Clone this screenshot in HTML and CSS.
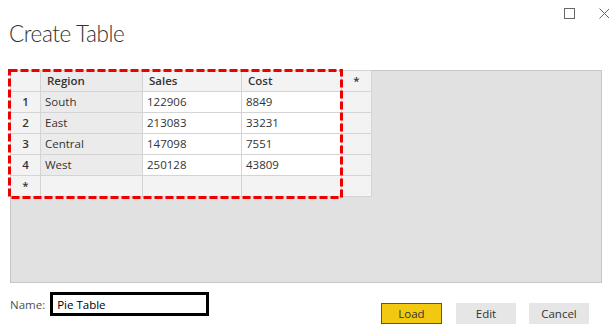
FILE: index.html
```html
<!DOCTYPE html>
<html lang="en">
<head>
    <meta charset="UTF-8">
    <meta name="viewport" content="width=device-width, initial-scale=1.0">
    <title>Create Table</title>
    <link rel="stylesheet" href="styles.css">
</head>
<body>
    <div class="dialog">
        <div class="titlebar">
            <svg class="win-btn" width="11" height="11" viewBox="0 0 11 11">
                <rect x="0.5" y="0.5" width="10" height="10" fill="none" stroke="#666" stroke-width="1"/>
            </svg>
            <svg class="win-btn" width="11" height="11" viewBox="0 0 11 11">
                <path d="M0.5 0.5 L10.5 10.5 M10.5 0.5 L0.5 10.5" stroke="#666" stroke-width="1"/>
            </svg>
        </div>
        <h1 class="title">Create Table</h1>

        <div class="grid-area">
            <table class="data-grid">
                <colgroup>
                    <col class="c-head">
                    <col class="c-region">
                    <col class="c-sales">
                    <col class="c-cost">
                    <col class="c-new">
                </colgroup>
                <tr class="head-row">
                    <th class="row-head"></th>
                    <th class="key-col">Region</th>
                    <th>Sales</th>
                    <th>Cost</th>
                    <th class="new-col">*</th>
                </tr>
                <tr>
                    <th class="row-head">1</th>
                    <td class="key-col">South</td>
                    <td>122906</td>
                    <td>8849</td>
                    <td class="new-col"></td>
                </tr>
                <tr>
                    <th class="row-head">2</th>
                    <td class="key-col">East</td>
                    <td>213083</td>
                    <td>33231</td>
                    <td class="new-col"></td>
                </tr>
                <tr>
                    <th class="row-head">3</th>
                    <td class="key-col">Central</td>
                    <td>147098</td>
                    <td>7551</td>
                    <td class="new-col"></td>
                </tr>
                <tr>
                    <th class="row-head">4</th>
                    <td class="key-col">West</td>
                    <td>250128</td>
                    <td>43809</td>
                    <td class="new-col"></td>
                </tr>
                <tr class="new-row">
                    <th class="row-head">*</th>
                    <td></td>
                    <td></td>
                    <td></td>
                    <td class="new-col"></td>
                </tr>
            </table>
            <!-- highlight drawn over the data block -->
            <svg class="selection" width="335" height="130" viewBox="0 0 335 130">
                <rect x="1.5" y="1.5" width="332" height="127" fill="none" stroke="#ee0000" stroke-width="3" stroke-dasharray="8 3"/>
            </svg>
        </div>

        <div class="footer">
            <label class="name-field">
                <span>Name:</span>
                <input type="text" class="name-input" value="Pie Table">
            </label>
            <div class="actions">
                <button class="btn btn-primary">Load</button>
                <button class="btn">Edit</button>
                <button class="btn">Cancel</button>
            </div>
        </div>
    </div>
</body>
</html>
```

FILE: styles.css
```css
body {
    margin: 0;
    background: #ffffff;
    font-family: "Open Sans", "Segoe UI", sans-serif;
    color: #333333;
}
.dialog {
    width: 609px;
    height: 333px;
    overflow: hidden;
}
.titlebar {
    display: flex;
    justify-content: flex-end;
    gap: 24px;
    height: 11px;
    padding: 8px 0 0 0;
    margin-right: -1px;
}
.win-btn {
    display: block;
}
.title {
    margin: -1px 0 20px 9px;
    font-family: Lato, "Open Sans", sans-serif;
    font-size: 22.5px;
    font-weight: 300;
    letter-spacing: -0.4px;
    line-height: 32px;
    color: #333333;
}
.grid-area {
    position: relative;
    margin: 0 7px 0 10px;
    height: 211px;
    background: #e1e1e1;
    border: 1px solid #c6c6c6;
}
.data-grid {
    border-collapse: collapse;
    table-layout: fixed;
    margin: -1px 0 0 -1px;
    font-size: 11.5px;
}
.c-head { width: 30px; }
.c-region { width: 102px; }
.c-sales { width: 99px; }
.c-cost { width: 100px; }
.c-new { width: 30px; }
.data-grid th,
.data-grid td {
    height: 20px;
    padding: 0 4px;
    border: 1px solid #d4d4d4;
    background: #ffffff;
    text-align: left;
    font-weight: 400;
    white-space: nowrap;
    line-height: 16px;
}
.data-grid .head-row th {
    background: #f3f3f3;
    font-weight: 600;
    padding-left: 6px;
}
.data-grid .row-head {
    background: #f3f3f3;
    font-weight: 600;
    text-align: center;
    padding: 0;
}
.data-grid .key-col,
.data-grid .head-row .key-col {
    background: #ebebeb;
}
.data-grid .new-col,
.data-grid .head-row .new-col {
    background: #f3f3f3;
    text-align: center;
    padding: 0;
}
.data-grid .new-row td {
    background: #f3f3f3;
}
.selection {
    position: absolute;
    left: -3px;
    top: -2px;
}
.footer {
    display: flex;
    justify-content: space-between;
    align-items: flex-start;
    padding: 9px 20px 0 10px;
}
.name-field {
    display: flex;
    align-items: center;
    gap: 5px;
    font-size: 11.5px;
    color: #505050;
}
.name-input {
    width: 145px;
    height: 18px;
    padding: 0 4px;
    border: 3px solid #000000;
    font-family: "Open Sans", "Segoe UI", sans-serif;
    font-size: 11.5px;
    color: #000000;
    outline: none;
    box-sizing: content-box;
}
.actions {
    display: flex;
    gap: 13px;
    margin-top: 11px;
}
.btn {
    width: 60px;
    height: 21px;
    padding: 0;
    border: 1px solid #e6e6e6;
    background: #e6e6e6;
    font-family: "Open Sans", "Segoe UI", sans-serif;
    font-size: 11.5px;
    color: #333333;
    cursor: pointer;
}
.btn-primary {
    width: 61px;
    margin-right: 1px;
    background: #f2c811;
    border-color: #e81123;
}
.btn-primary:hover {
    background: #e6bd0f;
}
.btn:hover {
    background: #d8d8d8;
}
```
